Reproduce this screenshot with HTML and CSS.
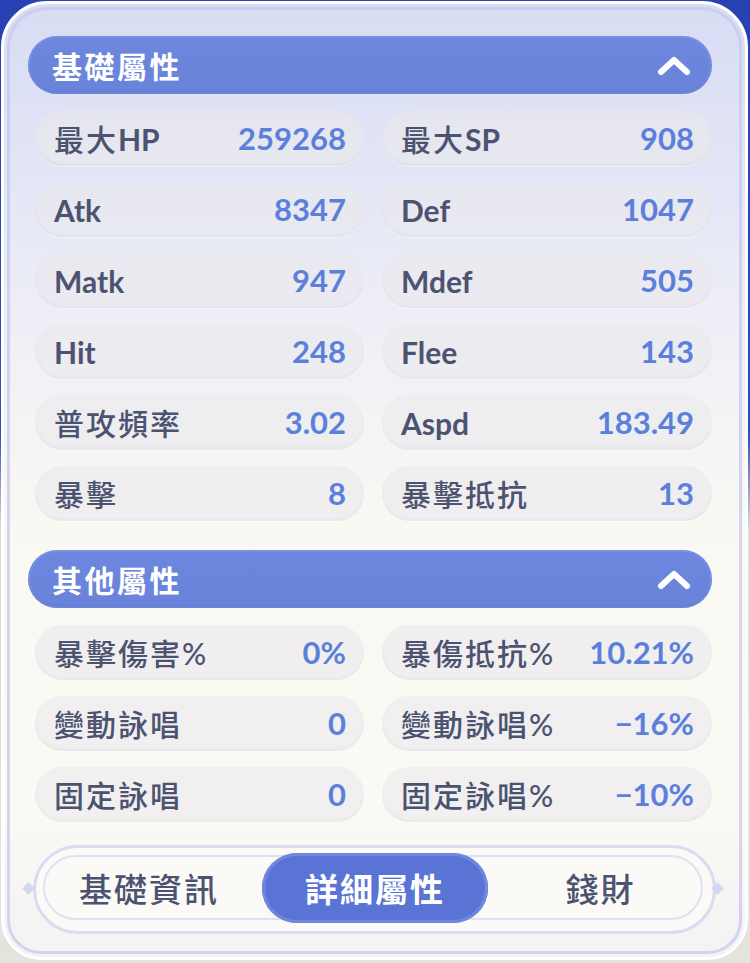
FILE: index.html
```html
<!DOCTYPE html>
<html lang="zh-Hant">
<head>
<meta charset="utf-8">
<title>屬性</title>
<link rel="stylesheet" href="styles.css">
</head>
<body>
<div class="screen">
<div class="panel">
  <div class="section-head">
    <span class="head-title">基礎屬性</span>
    <svg class="chev" viewBox="0 0 36 22" width="36" height="22"><polyline points="5,17 18,5 31,17" fill="none" stroke="#fff" stroke-width="6" stroke-linecap="round" stroke-linejoin="round"/></svg>
  </div>
  <div class="grid">
    <div class="cell"><span class="label">最大<span class="en">HP</span></span><span class="val">259268</span></div>
    <div class="cell"><span class="label">最大<span class="en">SP</span></span><span class="val">908</span></div>
    <div class="cell"><span class="label en">Atk</span><span class="val">8347</span></div>
    <div class="cell"><span class="label en">Def</span><span class="val">1047</span></div>
    <div class="cell"><span class="label en">Matk</span><span class="val">947</span></div>
    <div class="cell"><span class="label en">Mdef</span><span class="val">505</span></div>
    <div class="cell"><span class="label en">Hit</span><span class="val">248</span></div>
    <div class="cell"><span class="label en">Flee</span><span class="val">143</span></div>
    <div class="cell"><span class="label">普攻頻率</span><span class="val">3.02</span></div>
    <div class="cell"><span class="label en">Aspd</span><span class="val">183.49</span></div>
    <div class="cell"><span class="label">暴擊</span><span class="val">8</span></div>
    <div class="cell"><span class="label">暴擊抵抗</span><span class="val">13</span></div>
  </div>
  <div class="section-head second">
    <span class="head-title">其他屬性</span>
    <svg class="chev" viewBox="0 0 36 22" width="36" height="22"><polyline points="5,17 18,5 31,17" fill="none" stroke="#fff" stroke-width="6" stroke-linecap="round" stroke-linejoin="round"/></svg>
  </div>
  <div class="grid">
    <div class="cell"><span class="label">暴擊傷害%</span><span class="val">0%</span></div>
    <div class="cell"><span class="label">暴傷抵抗%</span><span class="val">10.21%</span></div>
    <div class="cell"><span class="label">變動詠唱</span><span class="val">0</span></div>
    <div class="cell"><span class="label">變動詠唱%</span><span class="val">−16%</span></div>
    <div class="cell"><span class="label">固定詠唱</span><span class="val">0</span></div>
    <div class="cell"><span class="label">固定詠唱%</span><span class="val">−10%</span></div>
  </div>
  <div class="tabbar">
    <div class="tabs">
      <div class="tab">基礎資訊</div>
      <div class="tab active">詳細屬性</div>
      <div class="tab">錢財</div>
    </div>
  </div>
</div>
</div>
</body>
</html>
```
FILE: styles.css
```css
html, body {
  margin: 0;
  padding: 0;
}
body {
  font-family: Lato, "Noto Sans CJK TC", sans-serif;
}
.screen {
  width: 750px;
  height: 963px;
  overflow: hidden;
  padding-top: 1px;
  box-sizing: border-box;
  background: linear-gradient(180deg, #2740b2 0%, #2f4bbb 45%, #dcdcd5 55%, #e4e4dc 100%);
}
.panel {
  position: relative;
  margin: 0 0 0 1px;
  width: 747px;
  height: 959px;
  box-sizing: border-box;
  border: 3px solid #ffffff;
  border-radius: 46px 46px 40px 40px;
  background: linear-gradient(180deg, #d8dcf4 0%, #e3e6f6 18%, #f1f1f6 38%, #faf8f3 55%, #fbf9f4 85%, #f4f2f3 100%);
  padding: 32px 0 0 24px;
}
.panel::before {
  content: "";
  position: absolute;
  top: 3px;
  left: 3px;
  right: 3px;
  bottom: 3px;
  border: 3px solid rgba(196, 201, 238, 0.75);
  border-radius: 40px 40px 34px 34px;
  pointer-events: none;
}
.section-head {
  position: relative;
  width: 684px;
  height: 58px;
  box-sizing: border-box;
  border-radius: 29px;
  background: linear-gradient(180deg, #6c87dd 0%, #6983da 100%);
  box-shadow: inset 0 -3px 0 rgba(60, 80, 170, 0.12), inset 0 0 0 2px rgba(140, 160, 235, 0.35);
  display: flex;
  align-items: center;
  justify-content: space-between;
  padding: 0 20px 0 24px;
}
.head-title {
  font-family: "Noto Sans CJK TC", sans-serif;
  font-weight: 700;
  font-size: 30px;
  line-height: 1;
  color: #ffffff;
  letter-spacing: 2.5px;
}
.chev {
  display: block;
  margin-top: 2px;
}
.section-head.second {
  margin-top: 29px;
}
.grid {
  display: grid;
  grid-template-columns: 329px 330px;
  column-gap: 18px;
  row-gap: 16px;
  margin: 17px 0 0 7px;
}
.cell {
  height: 55px;
  box-sizing: border-box;
  border-radius: 28px;
  background: rgba(234, 233, 236, 0.62);
  box-shadow: inset 0 -2px 3px rgba(140, 140, 170, 0.08), 0 1px 0 rgba(255, 255, 255, 0.45);
  display: flex;
  align-items: center;
  justify-content: space-between;
  padding: 0 18px 0 19px;
}
.label {
  font-size: 30px;
  font-weight: 500;
  line-height: 1;
  color: #4b5371;
  letter-spacing: 2px;
}
.en {
  font-weight: 700;
  letter-spacing: 0;
}
.val {
  font-size: 31px;
  font-weight: 700;
  line-height: 1;
  color: #5b80dc;
}
.tabbar {
  position: relative;
  margin: 23px 0 0 5px;
  width: 683px;
  height: 89px;
  box-sizing: border-box;
  border: 3px solid #d9dcf1;
  border-radius: 45px;
  background: #fbfaf6;
  padding: 5px 0 0 0;
}
.tabbar::before {
  content: "";
  position: absolute;
  top: 7px;
  left: 7px;
  right: 10px;
  bottom: 11px;
  border: 2px solid #dfe1f2;
  border-radius: 34px;
  pointer-events: none;
}
.tabbar::after {
  content: "";
  position: absolute;
  top: 36px;
  right: -9px;
  width: 9px;
  height: 9px;
  background: #d3d7ef;
  transform: rotate(45deg);
}
.tabs {
  position: relative;
  display: grid;
  grid-template-columns: 226px 226px 225px;
}
.tabs::before {
  content: "";
  position: absolute;
  top: 31px;
  left: -12px;
  width: 9px;
  height: 9px;
  background: #d3d7ef;
  transform: rotate(45deg);
}
.tab {
  height: 70px;
  display: flex;
  align-items: center;
  justify-content: center;
  font-family: "Noto Sans CJK TC", sans-serif;
  font-weight: 500;
  font-size: 33px;
  line-height: 1;
  color: #4b5371;
  letter-spacing: 2px;
  border-radius: 35px;
}
.tab.active {
  position: relative;
  background: #5a74d6;
  box-shadow: inset 0 0 0 3px #6e88df, inset 0 -3px 0 rgba(40, 60, 160, 0.15);
  color: #ffffff;
  font-weight: 700;
}
```
